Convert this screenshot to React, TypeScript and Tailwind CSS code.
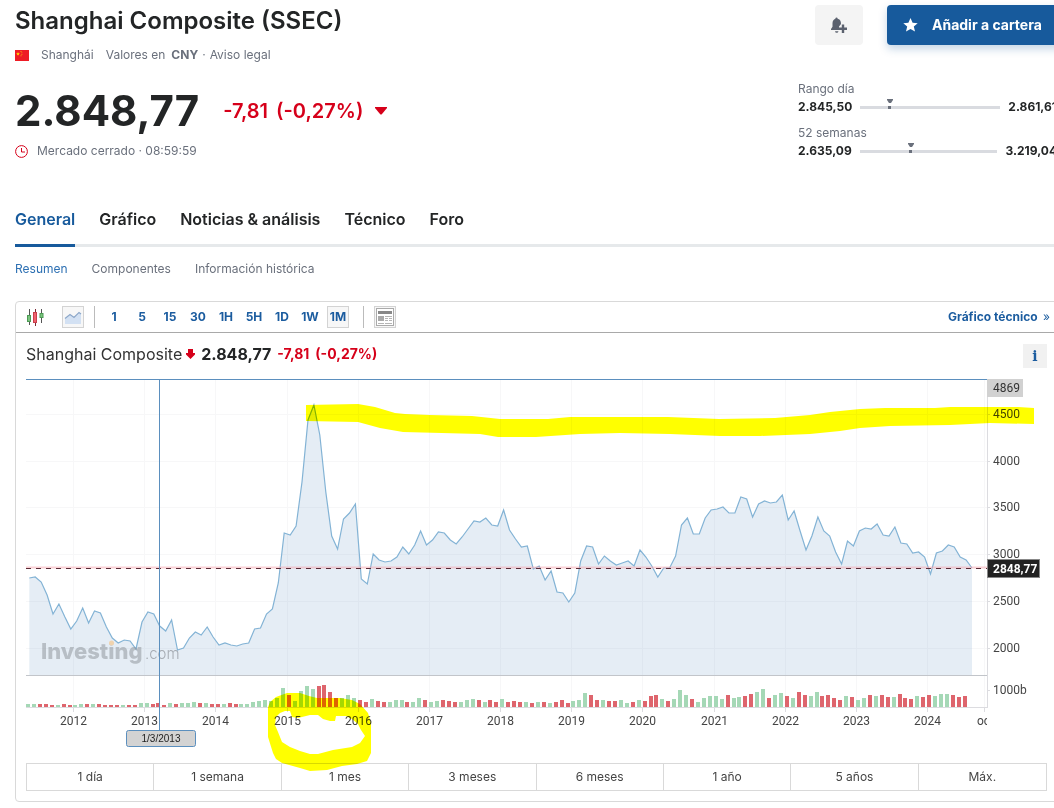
import { useState } from 'react'

const tabs = ['General', 'Gráfico', 'Noticias & análisis', 'Técnico', 'Foro']
const subTabs = ['Resumen', 'Componentes', 'Información histórica']
const intervals = ['1', '5', '15', '30', '1H', '5H', '1D', '1W', '1M']
const ranges = ['1 día', '1 semana', '1 mes', '3 meses', '6 meses', '1 año', '5 años', 'Máx.']

// monthly closes, as y positions in the plot
const closes = [
  578, 577, 582, 595, 614, 604, 617, 629, 621, 608, 623, 611, 613, 627, 638, 643, 640, 641, 649, 622,
  612, 614, 626, 631, 620, 650, 648, 638, 632, 635, 627, 637, 645, 643, 645, 646, 644, 643, 629, 628,
  614, 609, 583, 533, 535, 526, 482, 420, 405, 435, 492, 536, 549, 519, 513, 504, 579, 584, 554, 560,
  562, 561, 557, 547, 554, 545, 531, 545, 540, 532, 533, 540, 544, 537, 529, 521, 522, 518, 525, 526,
  510, 530, 539, 547, 546, 569, 566, 580, 571, 592, 593, 602, 593, 561, 546, 547, 564, 556, 561, 565,
  563, 561, 566, 550, 557, 566, 577, 568, 568, 556, 525, 518, 534, 534, 518, 510, 509, 507, 513, 513,
  497, 499, 517, 504, 501, 503, 502, 495, 520, 511, 531, 550, 536, 517, 531, 536, 552, 564, 541, 546,
  531, 528, 529, 524, 535, 536, 527, 543, 544, 553, 552, 557, 574, 553, 551, 545, 547, 557, 560, 568,
]

// monthly volume: g = up month, r = down month, then the bar height
const volumes = (
  'g3 g3 r3 r3 r2 g2 r3 r2 g2 g3 r3 g3 r3 r2 r2 r2 g2 r2 r2 g4 g4 r3 r4 r2 g4 r3 g4 g4 g5 r4 ' +
  'g4 r3 r3 g3 r4 r3 g3 g3 g5 g6 g7 g6 g9 g19 r12 g6 g16 g21 g18 r21 r22 r15 r9 g9 g12 g9 r7 r5 g8 r6 ' +
  'r5 g5 g7 g7 r5 g5 g9 r7 g5 g6 r7 r6 r5 g5 g7 g8 r7 g5 r7 r5 g8 r5 r6 r5 g5 r4 g5 r5 g4 r5 ' +
  'r7 r4 g6 g7 g14 r12 r7 g7 r6 r6 g7 g4 r5 g7 r6 r11 r12 g8 r6 g8 g17 g12 r8 g5 g9 g11 g11 g8 r12 g9 ' +
  'g10 r11 r13 g15 g18 r9 g12 g14 r11 g9 r15 r12 g11 g15 r11 r12 r9 r7 g11 r10 g7 g9 r12 g11 r12 r10 g10 r13 r9 r8 ' +
  'g11 r10 r12 g11 g13 g13 r12 r10 r11'
).split(' ')

const years = [
  [73, '2012'],
  [144, '2013'],
  [215, '2014'],
  [287, '2015'],
  [358, '2016'],
  [429, '2017'],
  [500, '2018'],
  [571, '2019'],
  [642, '2020'],
  [714, '2021'],
  [785, '2022'],
  [856, '2023'],
  [927, '2024'],
] as const

const levels = [
  [414, '4500'],
  [461, '4000'],
  [507, '3500'],
  [554, '3000'],
  [601, '2500'],
  [648, '2000'],
] as const

const step = 5.929
const line = closes.map((y, i) => `${(29.3 + i * step).toFixed(1)},${y}`).join(' ')

function RangeBar({ label, low, high, position }: { label: string; low: string; high: string; position: number }) {
  return (
    <div>
      <p className="text-xs leading-[18px] text-[#6a707c]">{label}</p>
      <div className="flex items-center gap-2 text-xs leading-[18px] font-bold text-[#232526]">
        <span>{low}</span>
        <div className="relative h-[3px] flex-1 bg-[#d9dbe0]">
          <div className="absolute -top-[7px] flex -translate-x-1/2 flex-col items-center gap-[3px]" style={{ left: `${position}%` }}>
            <svg width="6" height="4" viewBox="0 0 6 4" fill="#6a707c">
              <path d="M0 0h6v1L4 4H2L0 1z" />
            </svg>
            <span className="h-[3px] w-[3px] bg-[#6a707c]" />
          </div>
        </div>
        <span>{high}</span>
      </div>
    </div>
  )
}

function CandleIcon() {
  return (
    <svg width="18" height="18" viewBox="0 0 18 18">
      <path d="M3.500 1v16M15.500 1v14" stroke="#555" />
      <path d="M9.500 1v17" stroke="#7b2a35" />
      <rect x="1.500" y="7.500" width="3" height="6" fill="#7cc47f" stroke="#4d9a54" />
      <rect x="7.500" y="4.500" width="3" height="10" fill="#f0616d" stroke="#c9404d" />
      <rect x="14" y="5.500" width="3" height="4" fill="#7cc47f" stroke="#4d9a54" />
    </svg>
  )
}

function AreaIcon() {
  return (
    <svg width="18" height="14" viewBox="0 0 18 14">
      <path d="M1 9l5-4 4 3 6-5 1 1v10H1z" fill="#d3e1f3" />
      <path d="M1 8.500l5-4 4 3 5-5 2 1.500" fill="none" stroke="#8aa6c9" strokeWidth="1.200" />
    </svg>
  )
}

function NewsIcon() {
  return (
    <svg width="18" height="18" viewBox="0 0 18 18">
      <rect x="0.500" y="0.500" width="17" height="17" fill="#fff" stroke="#aaa" />
      <rect x="2" y="3" width="14" height="3" fill="#888" />
      <rect x="2" y="8" width="6" height="5" fill="#aaa" />
      <path d="M9 8.500h7M9 10.500h3M13 10.500h3M9 12.500h3M13 12.500h3M2 15.500h6M9 15.500h7" stroke="#b5b5b5" />
    </svg>
  )
}

function Chart() {
  return (
    <div className="relative">
      <svg viewBox="26 378 1021 372" className="block w-full font-[Roboto,sans-serif] text-[12px]">
        <g stroke="#f7f7f8">
          {levels.map(([y]) => (
            <path key={y} d={`M26 ${y + 0.5}H987`} />
          ))}
          {years.map(([x]) => (
            <path key={x} d={`M${x + 0.5} 380V707`} />
          ))}
          <path d="M984.500 380V707" />
        </g>

        <polygon points={`29.300,675 ${line} 972,675`} fill="#5b8fbe" fillOpacity="0.16" />
        <polyline points={line} fill="none" stroke="#83b3d5" strokeWidth="1.200" />

        {/* watermark */}
        <text x="41" y="659" fill="#8a8f96" fillOpacity="0.5" className="font-[Inter,sans-serif] text-[22px] font-extrabold">
          Investing
        </text>
        <text x="145" y="659" fill="#8a8f96" fillOpacity="0.7" className="font-[Inter,sans-serif] text-[15px] font-light">
          .com
        </text>
        <circle cx="111.500" cy="643" r="2.500" fill="#f0d3ae" />

        {/* last price */}
        <path d="M26 567.500H987" stroke="#f5a3ae" strokeOpacity="0.5" strokeWidth="2" />
        <path d="M26 568.500H987" stroke="#5a2a35" strokeDasharray="5 5" />

        {volumes.map((v, i) => {
          const h = Number(v.slice(1))
          return (
            <rect
              key={i}
              x={Math.round(26 + i * step)}
              y={707 - h}
              width="4"
              height={h}
              fill={v[0] === 'g' ? '#a5d8b6' : '#de656d'}
            />
          )
        })}

        <path d="M26 675.500H987" stroke="#c2c5ca" />
        <path d="M26 707.500H987M987.500 380V708" stroke="#dcdce0" />
        <g stroke="#dcdce0">
          {levels.map(([y]) => (
            <path key={y} d={`M987 ${y + 0.5}h3`} />
          ))}
          {years.map(([x]) => (
            <path key={x} d={`M${x + 0.5} 708v4`} />
          ))}
          <path d="M987 690.500h3M984.500 708v4" />
        </g>

        <g fill="#444">
          {years.map(([x, year]) => (
            <text key={year} x={x + 0.5} y="725" textAnchor="middle">
              {year}
            </text>
          ))}
          <svg x="970" y="710" width="17" height="20">
            <text x="7" y="15">oct</text>
          </svg>
          {levels.map(([y, value]) => (
            <text key={value} x="993" y={y + 4}>
              {value}
            </text>
          ))}
          <text x="993" y="694">1000b</text>
        </g>

        {/* crosshair */}
        <path d="M26 379.500H987M159.500 379V730" stroke="#5b8fbe" fill="none" />
        <rect x="987" y="379" width="36" height="18" fill="#d1d1d1" />
        <text x="993" y="392" fill="#333">4869</text>
        <rect x="126.500" y="730.500" width="69" height="16" rx="2" fill="#d3d3d3" stroke="#5b8fbe" />
        <text x="161" y="742" textAnchor="middle" fill="#222" className="font-['Liberation_Sans',sans-serif] text-[10px]">
          1/3/2013
        </text>

        <rect x="987.500" y="559.500" width="52" height="18" fill="#222" stroke="#888" />
        <text x="993" y="573" fill="#fff" className="font-bold">2848,77</text>
      </svg>

      {/* marker pen notes */}
      <svg
        viewBox="26 378 1021 372"
        className="pointer-events-none absolute inset-0 w-full overflow-visible mix-blend-multiply"
        fill="#ff0"
      >
        <path d="M306 405L358 404L375 407L395 413L405 414L430 415L472 416L500 419L548 419L570 417L600 417L668 417L719 419L775 418L810 415L830 412L860 409L885 408L935 408L950 407H1018L1034 408V424L990 423L950 425L890 426L860 428L840 431L810 434L760 436H720L670 434L620 433L580 434L536 437H498L480 434L403 432L380 428L358 422L306 421Z" />
        <path
          fillRule="evenodd"
          d="M268 707L270 702L276 697L287 693H300L309 696L317 698L340 698L352 700L360 704L368 713L371 723V753L367 761L357 764L342 766L327 770L310 771L300 768L282 763L276 759L273 753L268 737ZM276 717L280 713L285 711H290L292 717L298 718L310 715H318L323 719L330 721H335L336 716H346L352 719L358 724L361 730L365 736L360 743L352 747L333 750L318 754H310L300 751L290 747L282 742L278 732L275 725Z"
        />
      </svg>
    </div>
  )
}

export default function App() {
  const [interval, setInterval] = useState('1M')

  return (
    <div className="overflow-x-hidden bg-white pb-1.5 font-[Inter,sans-serif] text-[#232526]">
      <main className="-mr-[9px] pl-[15px]">
        <header className="flex items-start justify-between pr-1.5">
          <div className="pt-[7px]">
            <h1 className="text-2xl leading-7 font-semibold">Shanghai Composite (SSEC)</h1>

            <div className="mt-3 flex items-center text-xs leading-4 text-[#6a707c]">
              <svg width="14" height="11" viewBox="0 0 14 11" className="mr-3">
                <rect width="14" height="11" fill="#ee1c25" />
                <path d="M3 2l.5 1.200 1.300.1-1 .9.3 1.300L3 4.800l-1.100.7.3-1.300-1-.9 1.300-.1z" fill="#ffde00" />
                <path d="M5.500 1.500h1M6.500 2.800h.8M6.500 4.500h.8M5.500 5.800h1" stroke="#ffde00" strokeWidth="0.700" />
              </svg>
              <span className="mr-3">Shanghái</span>
              <span>Valores en</span>
              <b className="ml-1.5 font-bold">CNY</b>
              <span className="mx-1">·</span>
              <a href="#aviso">Aviso legal</a>
            </div>

            <div className="mt-6 flex items-center">
              <span className="text-[42px] leading-[48px] font-bold">2.848,77</span>
              <span className="ml-6 flex gap-2 text-xl font-semibold text-[#d6001a]">
                <span>-7,81</span>
                <span>(-0,27%)</span>
              </span>
              <svg width="12" height="8" viewBox="0 0 12 8" className="ml-3" fill="#d6001a">
                <path d="M0 0h12v1L7 7q-1 1-2 0L0 1z" />
              </svg>
            </div>

            <div className="mt-2 flex items-center gap-[9px] text-xs leading-4 text-[#6a707c]">
              <svg width="13" height="13" viewBox="0 0 13 13" fill="none" stroke="#d6001a">
                <circle cx="6.500" cy="6.500" r="5.900" />
                <path d="M6.500 3v4H10" />
              </svg>
              <span>Mercado cerrado · 08:59:59</span>
            </div>
          </div>

          <div className="w-[259px] shrink-0 pt-[5px]">
            <div className="flex gap-6 pl-[17px]">
              <button
                type="button"
                aria-label="Crear alerta"
                className="flex h-10 w-12 items-center justify-center rounded bg-[#f4f4f4]"
              >
                <svg width="16" height="17" viewBox="0 0 16 17" fill="#5b616e">
                  <path d="M5.500 0.500q1 0 1.200 1.200C9.500 2.500 10 4.500 10 7L8 9.500V13H0v-1l1.500-2.200V6.500C1.500 4 2.500 2.300 4.300 1.700 4.500.900 4.900.500 5.500.500zM4 14.200h3.500q-.3 1.500-1.800 1.500T4 14.200z" />
                  <path d="M10.800 7.500h2.400v3H16v2.400h-2.800v3h-2.400v-3H8v-2.400h2.800z" />
                </svg>
              </button>
              <button
                type="button"
                className="-mr-1.5 flex h-10 flex-1 items-center gap-3.5 rounded bg-[#175a9c] pl-4 text-sm font-bold whitespace-nowrap text-white shadow-[0_4px_8px_rgba(23,90,156,0.25)]"
              >
                <svg width="15" height="14" viewBox="0 0 15 14" fill="#fff">
                  <path d="M7.500 0l2.100 4.700 5.100.5-3.900 3.400 1.200 5-4.500-2.600L3 13.600l1.200-5L.3 5.200l5.100-.5z" />
                </svg>
                Añadir a cartera
              </button>
            </div>

            <div className="mt-[35px] space-y-2">
              <RangeBar label="Rango día" low="2.845,50" high="2.861,61" position={21} />
              <RangeBar label="52 semanas" low="2.635,09" high="3.219,04" position={37} />
            </div>
          </div>
        </header>

        <nav className="mt-[47px] flex gap-6 border-b-3 border-[#e6e9eb] text-base leading-6 font-semibold">
          {tabs.map((tab, i) => (
            <a
              key={tab}
              href={`#${tab}`}
              className={i === 0 ? '-mb-[3px] border-b-3 border-[#175a9c] pb-[13px] text-[#175a9c]' : 'pb-[13px]'}
            >
              {tab}
            </a>
          ))}
        </nav>

        <nav className="mt-3.5 flex gap-6 text-xs leading-4 text-[#6a707c]">
          {subTabs.map((tab, i) => (
            <a key={tab} href={`#${tab}`} className={i === 0 ? 'text-[#2d70b3]' : ''}>
              {tab}
            </a>
          ))}
        </nav>

        <section className="mt-6 rounded border border-[#d9d9d9] pb-2.5">
          <div className="flex h-[31px] items-center border-b border-[#a9a9a9] pl-2.5 text-[#1b5c9f]">
            <button type="button" aria-label="Velas" className="mr-[18px]">
              <CandleIcon />
            </button>
            <button
              type="button"
              aria-label="Área"
              className="flex h-[22px] w-[22px] items-center justify-center border border-[#d3d3d3] bg-[#f7f7f7]"
            >
              <AreaIcon />
            </button>
            <span className="mr-2 ml-2.5 h-[22px] w-px bg-[#bbb]" />
            <div className="flex gap-1.5">
              {intervals.map(item => (
                <button
                  key={item}
                  type="button"
                  onClick={() => setInterval(item)}
                  className={
                    item === interval
                      ? 'flex h-[22px] w-[22px] items-center justify-center border border-[#d3d3d3] bg-[#f7f7f7] text-xs font-bold'
                      : 'flex h-[22px] w-[22px] items-center justify-center text-xs font-bold'
                  }
                >
                  {item}
                </button>
              ))}
            </div>
            <span className="mr-2.5 ml-3.5 h-[22px] w-px bg-[#bbb]" />
            <button
              type="button"
              aria-label="Noticias"
              className="flex h-[22px] w-[22px] items-center justify-center border border-[#d3d3d3] bg-[#f7f7f7]"
            >
              <NewsIcon />
            </button>
            <a href="#tecnico" className="mr-3 ml-auto text-xs">
              <b>Gráfico técnico</b> <span className="ml-0.5">»</span>
            </a>
          </div>

          <div className="pr-[15px] pl-2.5">
            <div className="mt-[11px] mb-2.5 flex h-6 items-start leading-5">
              <div className="flex items-center">
                <span className="text-base leading-5 text-[#333]">Shanghai Composite</span>
                <svg width="9" height="10" viewBox="0 0 9 10" className="mr-1.5 ml-1" fill="#d6001a">
                  <path d="M2 0h5v4h2v1.500L4.500 10 0 5.500V4h2z" />
                </svg>
                <b className="text-base leading-5">2.848,77</b>
                <b className="ml-1.5 flex gap-1.5 text-sm leading-5 text-[#d6001a]">
                  <span>-7,81</span>
                  <span>(-0,27%)</span>
                </b>
              </div>
              <button
                type="button"
                className="ml-auto h-6 w-6 bg-[#f1f1f1] font-['DejaVu_Serif',serif] text-sm font-bold text-[#1b5c9f]"
              >
                i
              </button>
            </div>

            <Chart />

            <div className="mt-[13px] grid h-7 grid-cols-8 divide-x divide-[#d9d9d9] border border-[#d9d9d9]">
              {ranges.map(range => (
                <button key={range} type="button" className="text-xs text-[#444]">
                  {range}
                </button>
              ))}
            </div>
          </div>
        </section>
      </main>
    </div>
  )
}
